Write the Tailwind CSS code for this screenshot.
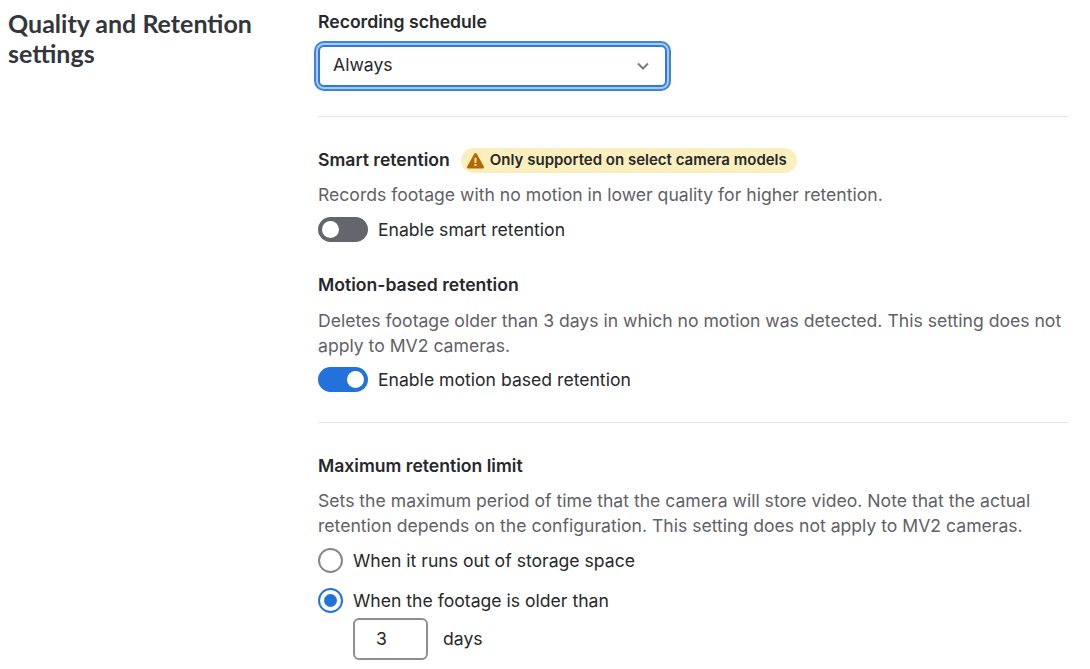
<!DOCTYPE html>
<html lang="en">
<head>
  <meta charset="UTF-8">
  <title>Quality and Retention settings</title>
  <script src="https://cdn.jsdelivr.net/npm/@tailwindcss/browser@4"></script>
</head>
<body class="bg-white text-[#27282b] font-['Inter',sans-serif] overflow-hidden">
  <div class="flex w-[1090px] h-[669px] overflow-hidden pl-2 pt-[8px]">
    <h2 class="w-[310px] shrink-0 text-[25px] leading-[30px] font-bold text-[#33363d] font-['Lato',sans-serif]">Quality and Retention<br>settings</h2>
    <main class="w-[750px] text-[17.6px]">
      <label class="block leading-7 font-semibold">Recording schedule</label>
      <div class="mt-[9px] w-[349px] h-[42px] border-2 border-[#2f79de] rounded-md shadow-[0_0_0_2px_#a9caf3,0_0_0_4px_#3f82e0] flex items-center justify-between pl-[13px] pr-[14px]">
        <span class="pb-[2px]">Always</span>
        <svg class="w-4 h-4 text-[#7a7c81]" viewBox="0 0 16 16" fill="none" stroke="currentColor" stroke-width="2"><path d="M3 5.500l5 5 5-5"/></svg>
      </div>
      <div class="mt-[29px] border-t border-[#e2e3e5]"></div>

      <div class="mt-[30px] flex items-center gap-[11px]">
        <span class="font-semibold">Smart retention</span>
        <span class="flex items-center gap-[5px] h-[25px] rounded-full bg-[#fbefbd] px-[5px] pr-[10px] text-[15px] font-semibold">
          <svg class="w-[19px] h-[19px] text-[#b26a00]" viewBox="0 0 20 20" fill="currentColor"><path fill-rule="evenodd" d="M10 2c.5 0 1 .3 1.300.8l7.500 13.500c.5 1-.2 2.200-1.300 2.200H2.500c-1.100 0-1.800-1.200-1.300-2.200L8.700 2.800C9 2.300 9.500 2 10 2zM9 7v5.500h2V7H9zm0 6.800v2h2v-2H9z"/></svg>
          Only supported on select camera models
        </span>
      </div>
      <p class="mt-[10px] leading-6 text-[#5f6166]">Records footage with no motion in lower quality for higher retention.</p>
      <div class="mt-[9px] flex items-center gap-[10px]">
        <span class="relative w-[50px] h-[25px] rounded-full bg-[#63666c] block"><span class="absolute left-[4px] top-[4px] w-[17px] h-[17px] rounded-full bg-white"></span></span>
        <span class="pt-[2px] leading-[24.4px]">Enable smart retention</span>
      </div>

      <h3 class="mt-[30px] leading-6 font-semibold">Motion-based retention</h3>
      <p class="mt-[11px] leading-[25px] text-[#5f6166]">Deletes footage older than 3 days in which no motion was detected. This setting does not<br>apply to MV2 cameras.</p>
      <div class="mt-[9px] flex items-center gap-[10px]">
        <span class="relative w-[50px] h-[25px] rounded-full bg-[#2372dc] block"><span class="absolute right-[4px] top-[4px] w-[17px] h-[17px] rounded-full bg-white"></span></span>
        Enable motion based retention
      </div>
      <div class="mt-[29px] border-t border-[#e2e3e5]"></div>

      <h3 class="mt-[31px] leading-6 font-semibold">Maximum retention limit</h3>
      <p class="mt-[10px] leading-[25px] text-[#5f6166]">Sets the maximum period of time that the camera will store video. Note that the actual<br>retention depends on the configuration. This setting does not apply to MV2 cameras.</p>
      <div class="mt-[10px] flex items-center gap-[10px] leading-6">
        <span class="w-[25px] h-[25px] rounded-full border-2 border-[#85878c] bg-white block"></span>
        When it runs out of storage space
      </div>
      <div class="mt-[15px] flex items-center gap-[10px] leading-6">
        <span class="w-[25px] h-[25px] rounded-full border-2 border-[#2372dc] bg-white flex items-center justify-center"><span class="w-[13px] h-[13px] rounded-full bg-[#2372dc]"></span></span>
        When the footage is older than
      </div>
      <div class="mt-[5px] ml-[35px] flex items-center gap-[15px]">
        <span class="w-[75px] h-[42px] border-2 border-[#8d8f94] rounded-md flex items-center pl-[21px]">3</span>
        days
      </div>
    </main>
  </div>
</body>
</html>
